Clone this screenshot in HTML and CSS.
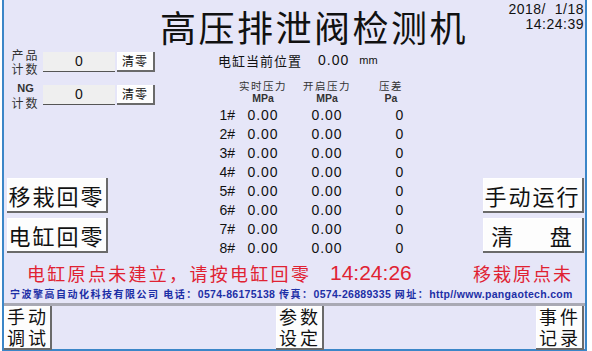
FILE: index.html
```html
<!DOCTYPE html>
<html lang="zh-CN">
<head>
  <meta charset="UTF-8">
  <title>高压排泄阀检测机</title>
  <link rel="stylesheet" href="styles.css">
</head>
<body>
  <div class="screen">
    <div class="header">
      <h1>高压排泄阀检测机</h1>
      <div class="clock">
        <div>2018/&nbsp;&nbsp;1/18</div>
        <div>14:24:39</div>
      </div>
    </div>

    <div class="main">
      <div class="left-col">
        <div class="counter">
          <div class="counter-label">产品<br>计数</div>
          <div class="field">0</div>
          <button class="btn small">清零</button>
        </div>
        <div class="counter">
          <div class="counter-label"><b class="ng">NG</b><br>计数</div>
          <div class="field">0</div>
          <button class="btn small">清零</button>
        </div>
        <div class="big-buttons">
          <button class="btn big">移栽回零</button>
          <button class="btn big">电缸回零</button>
        </div>
      </div>

      <div class="center-col">
        <div class="position">
          <span class="position-label">电缸当前位置</span>
          <span class="position-value">0.00</span>
          <span class="position-unit">mm</span>
        </div>
        <div class="table">
          <div></div>
          <div class="th">实时压力<br><b>MPa</b></div>
          <div class="th">开启压力<br><b>MPa</b></div>
          <div class="th">压差<br><b>Pa</b></div>

          <div class="no">1#</div><div class="val">0.00</div><div class="val">0.00</div><div class="val diff">0</div>
          <div class="no">2#</div><div class="val">0.00</div><div class="val">0.00</div><div class="val diff">0</div>
          <div class="no">3#</div><div class="val">0.00</div><div class="val">0.00</div><div class="val diff">0</div>
          <div class="no">4#</div><div class="val">0.00</div><div class="val">0.00</div><div class="val diff">0</div>
          <div class="no">5#</div><div class="val">0.00</div><div class="val">0.00</div><div class="val diff">0</div>
          <div class="no">6#</div><div class="val">0.00</div><div class="val">0.00</div><div class="val diff">0</div>
          <div class="no">7#</div><div class="val">0.00</div><div class="val">0.00</div><div class="val diff">0</div>
          <div class="no">8#</div><div class="val">0.00</div><div class="val">0.00</div><div class="val diff">0</div>
        </div>
      </div>

      <div class="right-col">
        <div class="big-buttons">
          <button class="btn big">手动运行</button>
          <button class="btn big">清&nbsp;&nbsp;&nbsp;&nbsp;&nbsp;盘</button>
        </div>
      </div>
    </div>

    <div class="status">
      <span class="alarm">电缸原点未建立，请按电缸回零</span>
      <span class="alarm-time">14:24:26</span>
      <span class="alarm-right">移栽原点未</span>
    </div>

    <div class="company">宁波擎高自动化科技有限公司 电话：<span class="num">0574-86175138</span> 传真：<span class="num">0574-26889335</span> 网址：<span class="num">http//www.pangaotech.com</span></div>

    <div class="footer">
      <button class="btn nav">手动<br>调试</button>
      <button class="btn nav mid">参数<br>设定</button>
      <button class="btn nav last">事件<br>记录</button>
    </div>
  </div>
</body>
</html>
```

FILE: styles.css
```css
body {
  margin: 0;
  width: 592px;
  height: 351px;
  overflow: hidden;
  background: #ffffff;
  font-family: "Noto Sans CJK SC", sans-serif;
  color: #111111;
}

.screen {
  margin-left: 2px;
  width: 581px;
  height: 349px;
  background: #e6e6f8;
  border-left: 2px solid #3b86c8;
  border-right: 2px solid #3b86c8;
  border-bottom: 2px solid #3b86c8;
}

.header {
  display: flex;
  height: 46px;
}

h1 {
  margin: 0 0 0 156px;
  padding-top: 6px;
  font-size: 36px;
  font-weight: normal;
  letter-spacing: 2.5px;
  line-height: 40px;
  white-space: nowrap;
}

.clock {
  margin-left: auto;
  padding: 2px 1px 0 0;
  text-align: right;
  font-family: "Liberation Sans", sans-serif;
  font-size: 14px;
  line-height: 14.5px;
  letter-spacing: 0.5px;
}

.main {
  display: grid;
  grid-template-columns: 156px 323px 102px;
  height: 212px;
}

.left-col, .right-col {
  display: flex;
  flex-direction: column;
}

.counter {
  display: flex;
  align-items: center;
  height: 27px;
  margin-top: 2px;
  margin-bottom: 4px;
}

.counter-label {
  width: 35px;
  padding-left: 4px;
  font-size: 12px;
  line-height: 13.5px;
  letter-spacing: 2px;
  text-align: center;
  color: #333333;
}

.counter-label .ng {
  font-family: "Liberation Sans", sans-serif;
  font-size: 11px;
  letter-spacing: 0;
}

.field {
  width: 72px;
  height: 19px;
  margin-right: 2px;
  background: #efefef;
  border-bottom: 1px solid #555555;
  font-family: "Liberation Sans", sans-serif;
  font-size: 14px;
  line-height: 19px;
  text-align: center;
}

.btn {
  padding: 0;
  background: #fdfdfd;
  border: none;
  border-right: 2px solid #6a6a6a;
  border-bottom: 2px solid #6a6a6a;
  box-shadow: inset 1px 1px 0 #ffffff;
  font-family: "Noto Sans CJK SC", sans-serif;
  color: #111111;
  cursor: pointer;
}

.btn.small {
  width: 38px;
  height: 20px;
  font-size: 12px;
  line-height: 16px;
  letter-spacing: 1px;
}

.big-buttons {
  display: flex;
  flex-direction: column;
  gap: 5px;
  margin-top: auto;
  padding-bottom: 5px;
}

.left-col .big-buttons {
  padding-left: 3px;
}

.btn.big {
  width: 101px;
  height: 35px;
  font-size: 22px;
  line-height: 30px;
  letter-spacing: 2px;
  white-space: nowrap;
}

.center-col {
  padding-left: 44px;
}

.position {
  display: flex;
  align-items: center;
  height: 22px;
  margin-top: 3px;
  padding-left: 14px;
  font-size: 13px;
}

.position-label {
  letter-spacing: 1px;
}

.position-value {
  margin-left: 16px;
  font-family: "Liberation Sans", sans-serif;
  font-size: 14px;
  letter-spacing: 1px;
}

.position-unit {
  margin-left: 10px;
  font-family: "Liberation Sans", sans-serif;
  font-size: 11px;
}

.table {
  display: grid;
  grid-template-columns: 32px 54px 64px 64px;
  grid-template-rows: 26px repeat(8, 19px);
  margin-top: 9px;
}

.table > :nth-child(4n+3),
.table > :nth-child(4n+4) {
  padding-left: 10px;
}

.table .th {
  font-size: 10.5px;
  line-height: 11.5px;
  text-align: center;
  letter-spacing: 1.5px;
  white-space: nowrap;
  color: #333333;
}

.table .th b {
  font-family: "Liberation Sans", sans-serif;
  font-size: 10.5px;
  letter-spacing: 0;
}

.table .no, .table .val {
  font-family: "Liberation Sans", sans-serif;
  font-size: 14px;
  line-height: 19px;
}

.table .no {
  padding-right: 1px;
  text-align: right;
}

.table .val {
  text-align: center;
  letter-spacing: 1px;
}

.table .val.diff {
  padding-left: 28px;
}

.status {
  display: flex;
  align-items: center;
  height: 29px;
  color: #e02232;
}

.alarm {
  width: 303px;
  padding-left: 23px;
  font-size: 18px;
  letter-spacing: 2.3px;
  white-space: nowrap;
}

.alarm-time {
  font-family: "Liberation Sans", sans-serif;
  font-size: 21px;
}

.alarm-right {
  margin-left: auto;
  padding-right: 12px;
  font-size: 18px;
  letter-spacing: 2px;
}

.company {
  height: 14px;
  padding-left: 6px;
  font-size: 10px;
  line-height: 14px;
  letter-spacing: 1.5px;
  font-weight: bold;
  color: #1d2fa6;
  white-space: nowrap;
}

.company .num {
  font-family: "Liberation Sans", sans-serif;
  font-size: 10.5px;
  letter-spacing: 0.3px;
}

.footer {
  display: flex;
  align-items: flex-end;
  height: 44px;
  margin-top: 2px;
  border-top: 3px solid #a9a9b4;
}

.btn.nav {
  width: 48px;
  height: 44px;
  font-size: 18px;
  line-height: 21px;
  letter-spacing: 3px;
  padding-left: 2px;
}

.btn.nav.mid {
  margin-left: 224px;
}

.btn.nav.last {
  margin-left: auto;
  margin-right: 1px;
}
```
